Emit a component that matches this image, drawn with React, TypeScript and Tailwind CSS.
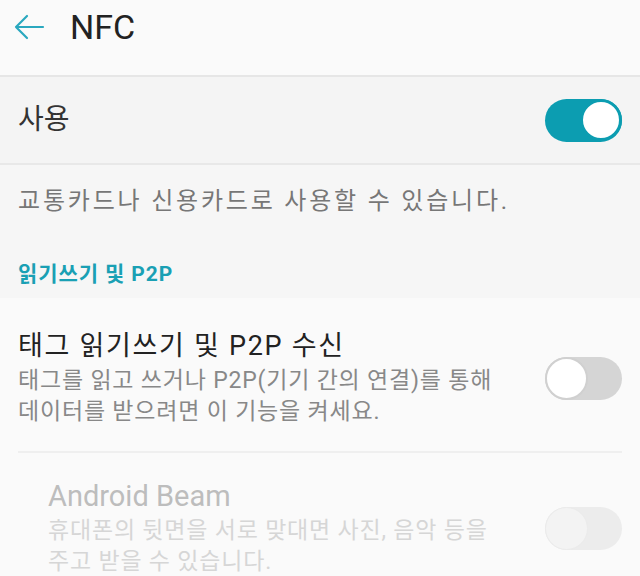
import React from 'react';

const font = { fontFamily: 'Roboto, "Noto Sans CJK KR", sans-serif' };

function Toggle({ state }: { state: 'on' | 'off' | 'disabled' }) {
  if (state === 'on') {
    return (
      <div className="w-[77px] h-[43px] rounded-full bg-[#0c9db1] flex justify-end items-center shrink-0">
        <div className="w-[42px] h-[42px] rounded-full bg-white border-[3px] border-[#0c9db1]" />
      </div>
    );
  }
  if (state === 'off') {
    return (
      <div className="w-[77px] h-[43px] rounded-full bg-[#d5d5d5] flex justify-start items-center shrink-0">
        <div className="w-[43px] h-[43px] rounded-full bg-white border-2 border-[#d0d0d0]" />
      </div>
    );
  }
  return (
    <div className="w-[77px] h-[43px] rounded-full bg-[#ececec] flex justify-start items-center shrink-0">
      <div className="w-[43px] h-[43px] rounded-full bg-[#f3f3f3] border border-[#ebebeb]" />
    </div>
  );
}

export default function App() {
  return (
    <div className="w-[640px] h-[576px] overflow-hidden bg-[#fafafa]" style={font}>
      {/* header */}
      <div className="h-[77px] flex items-start pt-[7px] pl-[12px] border-b-2 border-[#e6e6e6] bg-[#fafafa]">
        <svg width="34" height="34" viewBox="0 0 34 34" className="mt-[3px]">
          <path d="M31 17H4M15 6L4 17l11 11" fill="none" stroke="#2aa8bf" strokeWidth="2.2" strokeLinecap="round" strokeLinejoin="round" />
        </svg>
        <span className="ml-[24px] text-[34px] leading-[40px] text-[#222]">NFC</span>
      </div>

      {/* master switch */}
      <div className="h-[88px] flex items-center justify-between pl-[18px] pr-[18px] bg-[#f4f4f4] border-b-2 border-[#e8e8e8]">
        <span className="text-[28px] text-[#333] -mt-[1px]">사용</span>
        <Toggle state="on" />
      </div>

      {/* description + section header */}
      <div className="bg-[#f6f6f6] px-[18px] pt-[20px] h-[133px]">
        <div className="text-[24px] leading-[32px] text-[#777] tracking-[2.8px]">교통카드나 신용카드로 사용할 수 있습니다.</div>
        <div className="mt-[43px] text-[21px] leading-[28px] font-bold text-[#1aa0b4] tracking-[0.9px]">읽기쓰기 및 P2P</div>
      </div>

      {/* tag read/write */}
      <div className="px-[18px] pt-[31px] pb-[24px] flex items-center justify-between">
        <div>
          <div className="text-[27px] leading-[34px] text-[#222] tracking-[1.7px]">태그 읽기쓰기 및 P2P 수신</div>
          <div className="text-[23px] leading-[31px] text-[#888] tracking-[0.8px] mt-[2px]">
            태그를 읽고 쓰거나 P2P(기기 간의 연결)를 통해
            <br />
            데이터를 받으려면 이 기능을 켜세요.
          </div>
        </div>
        <Toggle state="off" />
      </div>

      <div className="mx-[18px] h-[2px] bg-[#efefef]" />

      {/* android beam */}
      <div className="pl-[48px] pr-[18px] pt-[26px] flex items-center justify-between">
        <div>
          <div className="text-[29px] leading-[34px] text-[#bdbdbd]">Android Beam</div>
          <div className="text-[23px] leading-[31px] text-[#d6d6d6] tracking-[0.8px] mt-[2px]">
            휴대폰의 뒷면을 서로 맞대면 사진, 음악 등을
            <br />
            주고 받을 수 있습니다.
          </div>
        </div>
        <Toggle state="disabled" />
      </div>
    </div>
  );
}
